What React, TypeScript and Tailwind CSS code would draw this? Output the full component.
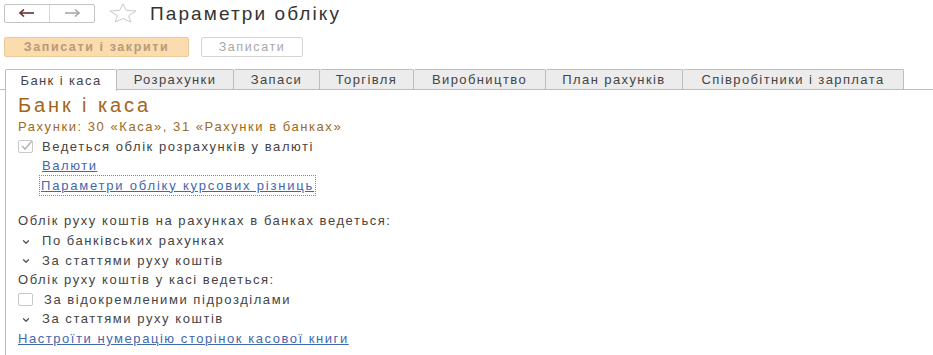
import { ChevronDown } from "lucide-react";

const tabs = [
  { label: "Банк і каса", w: "w-[112px]" },
  { label: "Розрахунки", w: "w-[117px]" },
  { label: "Запаси", w: "w-[86px]" },
  { label: "Торгівля", w: "w-[94px]" },
  { label: "Виробництво", w: "w-[132px]" },
  { label: "План рахунків", w: "w-[137px]" },
  { label: "Співробітники і зарплата", w: "w-[221px]" },
];

function Check({ checked }: { checked?: boolean }) {
  return (
    <span className="relative inline-block w-[15px] h-[13px] border border-[#c8c8c8] rounded-[2px] bg-white">
      {checked && (
        <svg viewBox="0 0 15 14" className="absolute -top-[2px] left-0 w-[15px] h-[14px]">
          <path d="M3 7 L6 10 L13 2" fill="none" stroke="#b8b8b8" strokeWidth="1.6" />
        </svg>
      )}
    </span>
  );
}

function Row({ children, indent }: { children: React.ReactNode; indent?: boolean }) {
  return <div className={`h-[19.6px] flex items-center ${indent ? "pl-[24px]" : ""}`}>{children}</div>;
}

function Chevron() {
  return (
    <span className="w-[24px] flex justify-start pl-[3px] pt-[2px]">
      <ChevronDown size={10} strokeWidth={3} className="text-[#555]" />
    </span>
  );
}

export default function App() {
  return (
    <div
      className="w-[933px] h-[355px] bg-white text-[#444] overflow-hidden"
      style={{ fontFamily: '"Liberation Sans", Arial, sans-serif' }}
    >
      <div className="flex items-center h-[24px] pt-[2px] pl-[4px]">
        <div className="flex h-[19px] w-[91px] border border-[#c4c4c4] rounded-[2px] bg-white">
          <div className="w-[45px] flex items-center justify-center border-r border-[#d6d6d6]">
            <svg width="16" height="8" viewBox="0 0 16 8">
              <path d="M1 4 H15" stroke="#6b2f2f" strokeWidth="1.6" />
              <path d="M5 0.5 L1 4 L5 7.5" fill="none" stroke="#6b2f2f" strokeWidth="1.6" />
            </svg>
          </div>
          <div className="flex-1 flex items-center justify-center">
            <svg width="16" height="8" viewBox="0 0 16 8">
              <path d="M1 4 H15" stroke="#a8a8a8" strokeWidth="1.6" />
              <path d="M11 0.5 L15 4 L11 7.5" fill="none" stroke="#a8a8a8" strokeWidth="1.6" />
            </svg>
          </div>
        </div>
        <svg width="30" height="20" viewBox="0 0 30 20" className="ml-[13px]">
          <path
            d="M15 1 L18.4 7.4 L28 8 L20.6 12.8 L23 19 L15 15.6 L7 19 L9.4 12.8 L2 8 L11.6 7.4 Z"
            fill="none"
            stroke="#c9c9c9"
            strokeWidth="1"
          />
        </svg>
        <span className="ml-[12px] text-[19px] text-[#333] tracking-[2.1px] leading-none">Параметри обліку</span>
      </div>

      <div className="flex items-center gap-[12px] mt-[13px] pl-[4px]">
        <div className="h-[20px] w-[185px] flex items-center justify-center bg-[#fadcae] border border-[#ecc997] rounded-[2px] text-[12.5px] font-bold tracking-[1.6px] text-[#b89a78]">
          Записати і закрити
        </div>
        <div className="h-[20px] w-[102px] flex items-center justify-center bg-white border border-[#d4d4d4] rounded-[2px] text-[12.5px] tracking-[1.6px] text-[#a8a8a8]">
          Записати
        </div>
      </div>

      <div className="flex mt-[12px] pl-[5px] border-b border-[#bdbdbd] h-[21px]">
        {tabs.map((t, i) => (
          <div
            key={t.label}
            className={`${t.w} flex items-center justify-center text-[13px] tracking-[1.4px] text-[#444] border-t border-r border-[#bdbdbd] rounded-t-[2px] ${
              i === 0 ? "bg-white border-l h-[22px] -mb-px" : "bg-[#ececec]"
            }`}
          >
            {t.label}
          </div>
        ))}
      </div>

      <div className="ml-[5px] border-l border-[#bdbdbd] pl-[12px] h-[270px] text-[13px] tracking-[1.55px]">
        <div className="pt-[3px] text-[20px] tracking-[2.9px] text-[#a4651a] leading-[24px]">Банк і каса</div>
        <Row>
          <span className="text-[#9c6a24]">Рахунки: 30 «Каса», 31 «Рахунки в банках»</span>
        </Row>
        <Row>
          <Check checked />
          <span className="ml-[9px]">Ведеться облік розрахунків у валюті</span>
        </Row>
        <Row indent>
          <span className="text-[#3f67ae] underline">Валюти</span>
        </Row>
        <Row indent>
          <span className="text-[#3f67ae] underline tracking-[1.8px] outline outline-1 outline-dotted outline-[#888] -ml-[2px] px-[1px]">
            Параметри обліку курсових різниць
          </span>
        </Row>
        <div className="h-[16px]" />
        <Row>Облік руху коштів на рахунках в банках ведеться:</Row>
        <Row>
          <Chevron />
          По банківських рахунках
        </Row>
        <Row>
          <Chevron />
          За статтями руху коштів
        </Row>
        <Row>Облік руху коштів у касі ведеться:</Row>
        <Row>
          <Check />
          <span className="ml-[11px]">За відокремленими підрозділами</span>
        </Row>
        <Row>
          <Chevron />
          За статтями руху коштів
        </Row>
        <Row>
          <span className="text-[#3f67ae] underline">Настроїти нумерацію сторінок касової книги</span>
        </Row>
      </div>
    </div>
  );
}
